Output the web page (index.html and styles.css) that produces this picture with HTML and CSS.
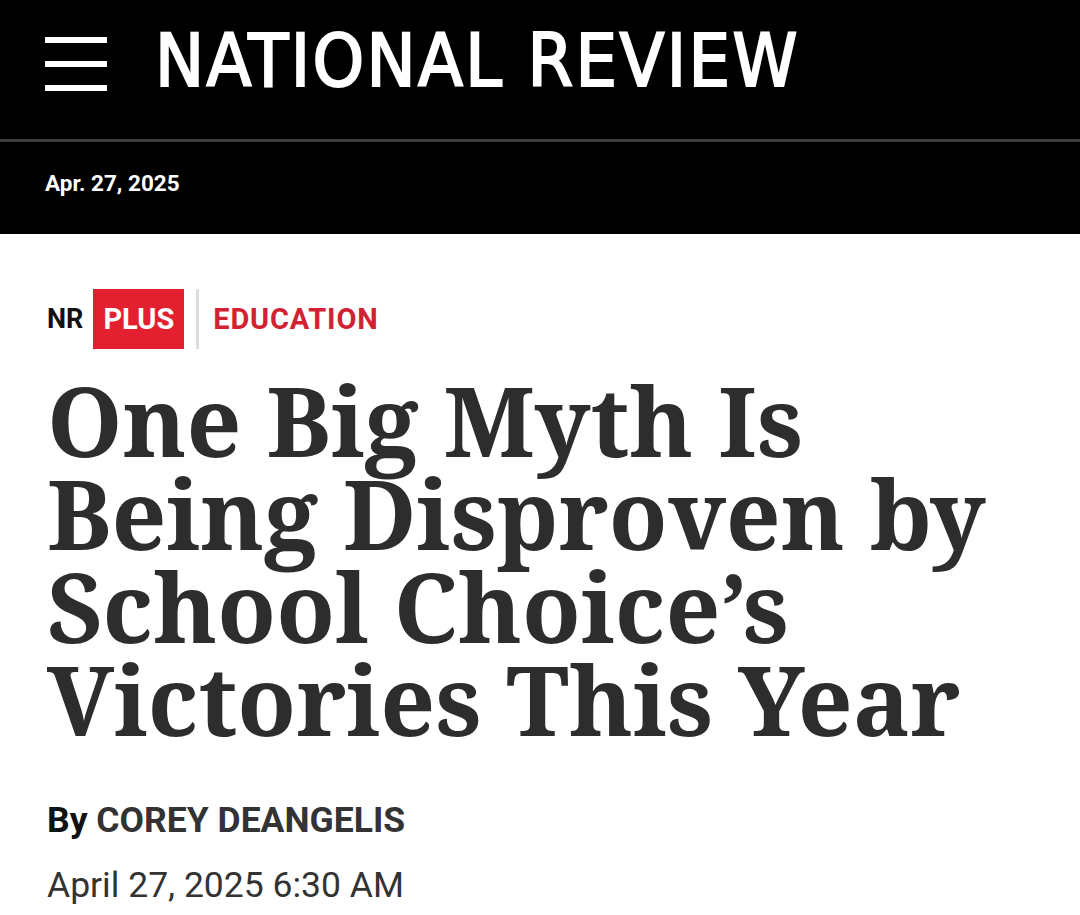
FILE: index.html
```html
<!DOCTYPE html>
<html lang="en">
<head>
<meta charset="utf-8">
<title>National Review</title>
<link rel="stylesheet" href="styles.css">
</head>
<body>
<header class="masthead">
  <div class="burger" aria-label="Menu">
    <span class="bar"></span>
    <span class="bar"></span>
    <span class="bar"></span>
  </div>
  <div class="logo">NATIONAL REVIEW</div>
</header>
<div class="datebar">
  <span class="datebar-text">Apr. 27, 2025</span>
</div>
<main class="article">
  <div class="tags">
    <span class="nr">NR</span>
    <span class="plus">PLUS</span>
    <span class="divider"></span>
    <span class="section">EDUCATION</span>
  </div>
  <h1 class="headline">One Big Myth Is Being Disproven by School Choice’s Victories This Year</h1>
  <div class="byline"><span class="by">By</span> <span class="author">COREY DEANGELIS</span></div>
  <div class="pubdate">April 27, 2025 6:30 AM</div>
</main>
</body>
</html>
```

FILE: styles.css
```css
* { box-sizing: border-box; }
html, body { margin: 0; padding: 0; background: #fff; }
body { font-family: Roboto, "Liberation Sans", sans-serif; }

.masthead {
  background: #000;
  height: 139px;
  display: flex;
  align-items: flex-start;
  padding-left: 45px;
}
.burger {
  margin-top: 37px;
  width: 62px;
  display: flex;
  flex-direction: column;
  gap: 18px;
}
.bar {
  display: block;
  height: 6px;
  background: #fff;
}
.logo {
  margin-left: 48px;
  margin-top: 24px;
  color: #fff;
  font-family: "DejaVu Sans Condensed", "DejaVu Sans", sans-serif;
  font-size: 73px;
  line-height: 1;
  letter-spacing: 2.4px;
  -webkit-text-stroke: 2px #fff;
  white-space: nowrap;
}

.datebar {
  background: #000;
  border-top: 3px solid #3c3c3c;
  height: 95px;
  padding: 30px 0 0 45px;
}
.datebar-text {
  display: block;
  color: #fff;
  font-weight: 700;
  font-size: 22.5px;
  line-height: 22px;
}

.article {
  padding: 55px 40px 0 47px;
}
.tags {
  display: flex;
  align-items: center;
  height: 60px;
}
.nr {
  font-weight: 700;
  font-size: 27px;
  color: #111;
  margin-right: 10px;
}
.plus {
  background: #e3202f;
  color: #fff;
  font-weight: 700;
  font-size: 29px;
  height: 60px;
  width: 91px;
  display: flex;
  align-items: center;
  justify-content: center;
}
.divider {
  width: 3px;
  height: 60px;
  background: #dddddd;
  margin: 0 14px 0 12px;
}
.section {
  color: #d22232;
  font-weight: 700;
  font-size: 29px;
  letter-spacing: 0.8px;
}

.headline {
  margin: 24px 0 0;
  font-family: "Noto Serif", "DejaVu Serif", serif;
  font-weight: 700;
  font-size: 96px;
  line-height: 93px;
  color: #2d2d2d;
}

.byline {
  margin-top: 55px;
  font-size: 35.5px;
  line-height: 40px;
  font-weight: 700;
}
.by { color: #111; }
.author { color: #333; }

.pubdate {
  margin-top: 25px;
  font-size: 35.5px;
  line-height: 40px;
  color: #333;
}
```
